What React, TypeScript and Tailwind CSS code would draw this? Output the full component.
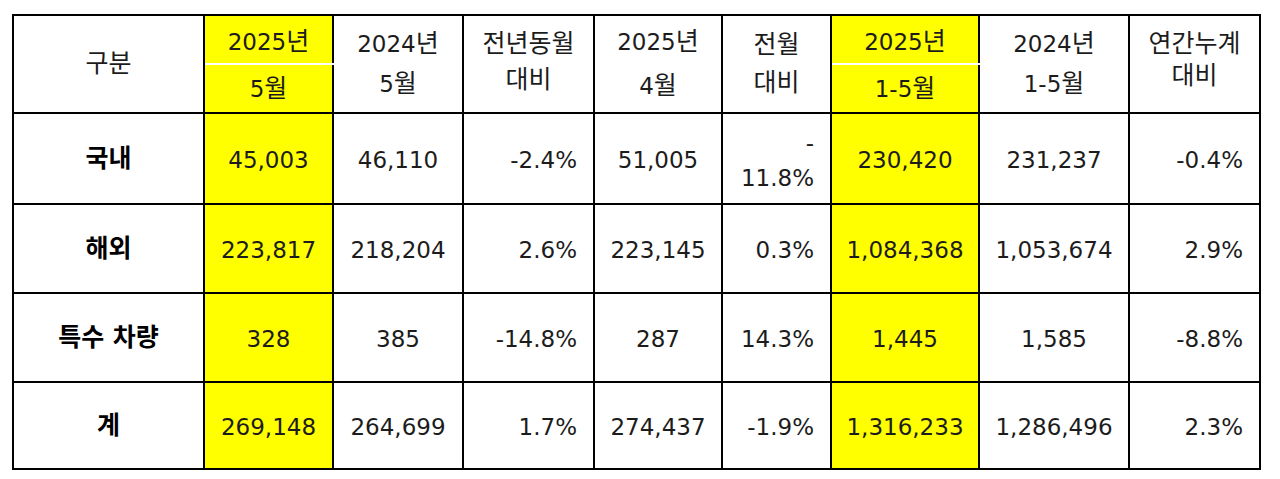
import React from 'react';

type Row = {
  label: string;
  cells: string[];
};

const rows: Row[] = [
  { label: '국내', cells: ['45,003', '46,110', '-2.4%', '51,005', '-\n11.8%', '230,420', '231,237', '-0.4%'] },
  { label: '해외', cells: ['223,817', '218,204', '2.6%', '223,145', '0.3%', '1,084,368', '1,053,674', '2.9%'] },
  { label: '특수 차량', cells: ['328', '385', '-14.8%', '287', '14.3%', '1,445', '1,585', '-8.8%'] },
  { label: '계', cells: ['269,148', '264,699', '1.7%', '274,437', '-1.9%', '1,316,233', '1,286,496', '2.3%'] },
];

const rowHeights = ['h-[91px]', 'h-[89px]', 'h-[89px]', 'h-[87px]'];

// which data columns are yellow / right aligned
const yellow = [true, false, false, false, false, true, false, false];
const right = [false, false, true, false, true, false, false, true];

const cellBase = 'border-2 border-black p-0 align-middle';

// hangul a bit larger than the digits, as in the sheet
const K: React.FC<{ children: React.ReactNode }> = ({ children }) => (
  <span className="text-[25px]">{children}</span>
);

const App: React.FC = () => {
  return (
    <div className="min-h-[479px] bg-white pl-[12px] pt-[14px] text-[#1c1c1c] font-['DejaVu_Sans','Noto_Sans_CJK_KR',sans-serif]">
      <table className="table-fixed border-collapse w-[1247px] text-[23px]">
        <colgroup>
          <col className="w-[191px]" />
          <col className="w-[129px]" />
          <col className="w-[130px]" />
          <col className="w-[131px]" />
          <col className="w-[128px]" />
          <col className="w-[109px]" />
          <col className="w-[148px]" />
          <col className="w-[150px]" />
          <col className="w-[131px]" />
        </colgroup>
        <thead>
          <tr className="h-[49px]">
            <th rowSpan={2} className={`${cellBase} font-normal text-center`}><K>구분</K></th>
            <th className={`${cellBase} border-b-white bg-[#ffff00] font-normal text-center pt-1`}>2025<K>년</K></th>
            <th rowSpan={2} className={`${cellBase} font-normal text-center leading-[40px]`}>2024<K>년</K><br />5<K>월</K></th>
            <th rowSpan={2} className={`${cellBase} font-normal text-center leading-[36px] pb-1`}><K>전년동월</K><br /><K>대비</K></th>
            <th rowSpan={2} className={`${cellBase} font-normal text-center leading-[44px]`}>2025<K>년</K><br />4<K>월</K></th>
            <th rowSpan={2} className={`${cellBase} font-normal text-center leading-[38px]`}><K>전월</K><br /><K>대비</K></th>
            <th className={`${cellBase} border-b-white bg-[#ffff00] font-normal text-center pt-1`}>2025<K>년</K></th>
            <th rowSpan={2} className={`${cellBase} font-normal text-center leading-[40px]`}>2024<K>년</K><br />1-5<K>월</K></th>
            <th rowSpan={2} className={`${cellBase} font-normal text-center leading-[32px] pb-2`}><K>연간누계</K><br /><K>대비</K></th>
          </tr>
          <tr className="h-[49px]">
            <th className={`${cellBase} border-t-white bg-[#ffff00] font-normal text-center`}>5<K>월</K></th>
            <th className={`${cellBase} border-t-white bg-[#ffff00] font-normal text-center`}>1-5<K>월</K></th>
          </tr>
        </thead>
        <tbody>
          {rows.map((row, i) => (
            <tr key={row.label} className={rowHeights[i]}>
              <td className={`${cellBase} text-center font-bold text-[25px] text-black`}>{row.label}</td>
              {row.cells.map((c, j) => (
                <td
                  key={j}
                  className={`${cellBase} ${yellow[j] ? 'bg-[#ffff00]' : ''} ${right[j] ? 'text-right pr-[16px]' : 'text-center'} pt-1`}
                >
                  {c.includes('\n') ? (
                    <div className="leading-[35px]">
                      {c.split('\n').map((line) => (
                        <div key={line}>{line}</div>
                      ))}
                    </div>
                  ) : (
                    c
                  )}
                </td>
              ))}
            </tr>
          ))}
        </tbody>
      </table>
    </div>
  );
};

export default App;
